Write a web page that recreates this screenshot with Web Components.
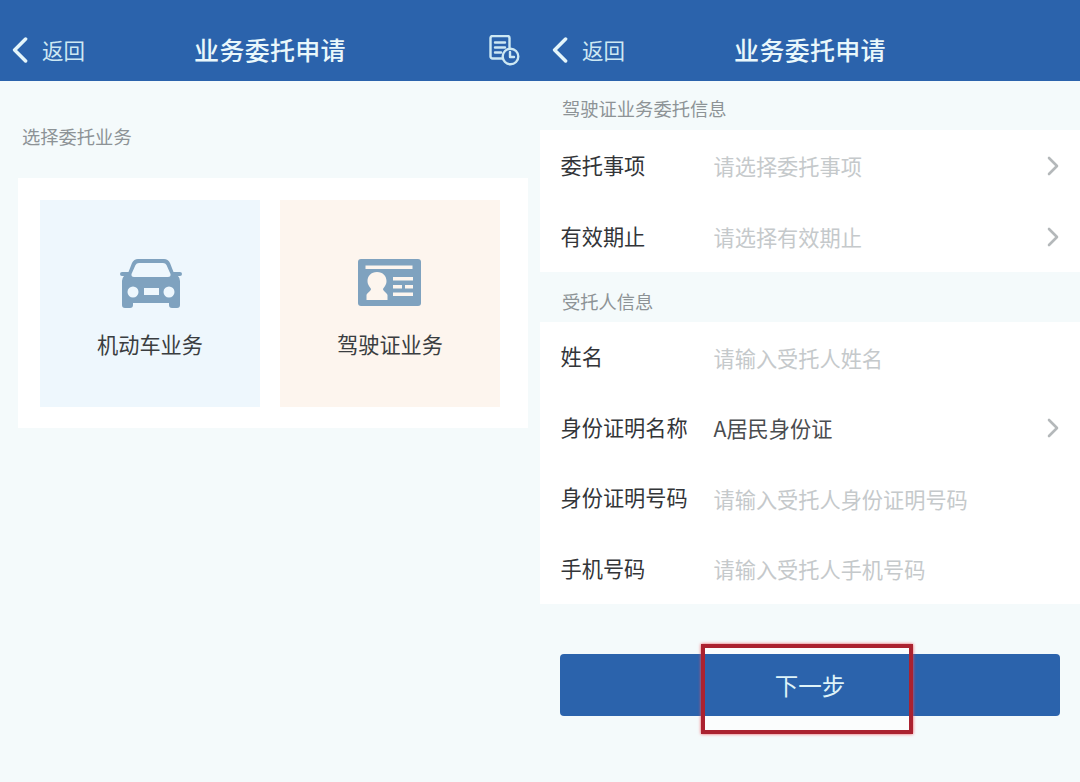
<!DOCTYPE html>
<html lang="zh-CN">
<head>
<meta charset="utf-8">
<title>业务委托申请</title>
<style>
html,body{margin:0;padding:0;background:#f4fafb;}
body{font-family:"Noto Sans CJK SC","Noto Sans",sans-serif;width:1080px;height:782px;overflow:hidden;}
</style>
</head>
<body>
<app-shell>
  <app-panel>
    <app-header history>业务委托申请</app-header>
    <section-label spacious>选择委托业务</section-label>
    <service-card>
      <service-tile tone="blue" icon="car">机动车业务</service-tile>
      <service-tile tone="peach" icon="id">驾驶证业务</service-tile>
    </service-card>
  </app-panel>
  <app-panel>
    <app-header>业务委托申请</app-header>
    <section-label>驾驶证业务委托信息</section-label>
    <form-group>
      <form-row chevron muted tall><span slot="label">委托事项</span>请选择委托事项</form-row>
      <form-row chevron muted tall><span slot="label">有效期止</span>请选择有效期止</form-row>
    </form-group>
    <section-label tall>受托人信息</section-label>
    <form-group>
      <form-row muted><span slot="label">姓名</span>请输入受托人姓名</form-row>
      <form-row chevron><span slot="label">身份证明名称</span>A居民身份证</form-row>
      <form-row muted><span slot="label">身份证明号码</span>请输入受托人身份证明号码</form-row>
      <form-row muted><span slot="label">手机号码</span>请输入受托人手机号码</form-row>
    </form-group>
    <primary-button>下一步</primary-button>
  </app-panel>
</app-shell>
<script>
function define(name, css, html, extra){
  customElements.define(name, class extends HTMLElement{
    constructor(){
      super();
      const r=this.attachShadow({mode:'open'});
      r.innerHTML='<style>'+css+'</style>'+(typeof html==='function'?html(this):html);
    }
    connectedCallback(){ if(extra) extra(this); }
  });
}
define('app-shell',':host{display:flex;width:1080px;height:782px;}','<slot></slot>');
define('app-panel',':host{display:flex;flex-direction:column;width:540px;height:782px;background:#f4fafb;}','<slot></slot>');

define('app-header',`
  :host{display:grid;grid-template-columns:1fr auto 1fr;align-items:center;height:81px;box-sizing:border-box;padding:17px 12px 0 12px;background:#2b63ac;flex:none;}
  .back{display:flex;align-items:center;gap:14px;color:#cde8f3;font-size:21.500px;line-height:30px;margin-top:2px;}
  .back svg{display:block;width:16px;height:26px;}
  .title{color:#e9f7fb;font-size:25px;font-weight:500;line-height:32px;letter-spacing:.3px;}
  .right{display:flex;justify-content:flex-end;align-self:start;margin:18px 7px 0 0;}
  .right svg{display:block;width:32px;height:32px;}
`,`
  <div class="back"><svg viewBox="0 0 16 26" fill="none" stroke="#e4f5fa" stroke-width="3.500" stroke-linecap="round" stroke-linejoin="round"><path d="M13.600 2 2.600 13l11 11"/></svg><span>返回</span></div>
  <div class="title"><slot></slot></div>
  <div class="right"></div>
`,el=>{
  if(el.hasAttribute('history')){
    el.shadowRoot.querySelector('.right').innerHTML=`<svg viewBox="0 0 32 32" fill="none" stroke="#cde8f3" stroke-width="2.400" stroke-linecap="round" stroke-linejoin="round">
      <path d="M14 23.500H3.500a2 2 0 0 1-2-2V3a2 2 0 0 1 2-2h15a2 2 0 0 1 2 2v9.500"/>
      <path d="M6 7.500h10M6 12.500h10M6 17.500h6"/>
      <circle cx="21.500" cy="21.500" r="7.800" fill="#2b63ac"/>
      <path d="M21 17v5h4"/></svg>`;
  }
});

define('section-label',`
  :host{display:flex;align-items:flex-end;height:49px;box-sizing:border-box;padding:0 0 9px 22px;color:#8d9396;font-size:18.300px;line-height:26px;flex:none;}
  :host([tall]){height:50px;padding-bottom:8px;}
  :host([spacious]){height:97px;padding-bottom:29px;}
`,'<slot></slot>');

define('service-card',`
  :host{display:flex;gap:20px;width:510px;height:250px;box-sizing:border-box;margin-left:18px;padding:22px 28px 21px 22px;background:#fff;}
`,'<slot></slot>');

const ICONS={
 car:`<svg style="margin-left:2px" width="62" height="49" viewBox="0 0 62 49"><path fill="#7fa2bf" fill-rule="evenodd" d="M18 0H44Q48 0 50 4L53.500 13H60Q62 13 62 15T60 17H58Q60 19 60 22V46Q60 49 57 49H52Q49 49 49 46V44H13V46Q13 49 10 49H5Q2 49 2 46V22Q2 19 4 17H2Q0 17 0 15T2 13H8.500L12 4Q14 0 18 0ZM19 4Q16.500 4 15.500 6L11.500 15Q11 18 14 18H48Q51 18 50.500 15L46.500 6Q45.500 4 43 4ZM13 27.500A5.500 5.500 0 1 0 13 38.500 5.500 5.500 0 1 0 13 27.500ZM49 27.500A5.500 5.500 0 1 0 49 38.500 5.500 5.500 0 1 0 49 27.500ZM24 29V36H39V29Z"/></svg>`,
 id:`<svg style="margin-right:2px" width="63" height="47" viewBox="0 0 63 47"><rect width="63" height="47" rx="3" fill="#7fa2bf"/><g fill="#fdf5ee"><rect x="7.500" y="6.500" width="47" height="3.500"/><path d="M19 13C25 13 28.500 17 28.500 22 28.500 26 26 28 25 30 25 32 29 34 29.500 36V41H8.500V36C9 34 13 32 13 30 12 28 9.500 26 9.500 22 9.500 17 13 13 19 13Z"/><rect x="35" y="18" width="20" height="3.500"/><rect x="35" y="26" width="9" height="3.500"/><rect x="47" y="26" width="8" height="3.500"/><rect x="35" y="33.500" width="20" height="3.500"/></g></svg>`
};
define('service-tile',`
  :host{display:flex;flex-direction:column;align-items:center;width:220px;height:207px;box-sizing:border-box;padding-top:59px;background:#eef7fd;color:#3a3d40;font-size:21.200px;}
  :host([tone=peach]){background:#fdf5ee;}
  .icon{height:49px;display:flex;}
  svg{display:block;}
  .text{margin-top:18px;line-height:36px;}
`,el=>`<div class="icon">${ICONS[el.getAttribute('icon')]||''}</div><div class="text"><slot></slot></div>`);

define('form-group',':host{display:block;background:#fff;flex:none;}','<slot></slot>');

define('form-row',`
  :host{display:flex;align-items:center;height:70.500px;box-sizing:border-box;padding:0 21px 0 20.500px;font-size:21.200px;color:#4a4d50;}
  :host([tall]){height:71px;}
  .label{width:153px;flex:none;color:#333538;margin-top:-3px;}
  .value{flex:1;min-width:0;}
  :host([muted]) .value{color:#c5c9cb;}
  svg{display:block;width:12px;height:20px;flex:none;margin-left:auto;}
`,`<div class="label"><slot name="label"></slot></div><div class="value"><slot></slot></div><svg viewBox="0 0 12 20" fill="none" stroke="#b4b8ba" stroke-width="2.600" stroke-linecap="round" stroke-linejoin="round"><path d="M2 2l8 8-8 8"/></svg>`,el=>{
  if(!el.hasAttribute('chevron')) el.shadowRoot.querySelector('svg').style.display='none';
});

define('primary-button',`
  :host{display:flex;position:relative;align-items:center;justify-content:center;width:500px;height:62px;margin:50px 0 0 20px;background:#2b63ac;border-radius:4px;color:#dff3f8;font-size:23.500px;flex:none;}
  .mark{position:absolute;left:141px;top:-10px;width:212px;height:90px;box-sizing:border-box;border:4px solid #ab2230;box-shadow:0 0 3px #f0505a;}
  .hole-top,.hole-bottom{position:absolute;left:145px;width:204px;background:#fbfdfd;}
  .hole-top{top:-6px;height:6px;}
  .hole-bottom{top:62px;height:14px;}
  .text{position:relative;}
`,`<div class="hole-top"></div><div class="hole-bottom"></div><div class="mark"></div><span class="text"><slot></slot></span>`);
</script>
</body>
</html>
